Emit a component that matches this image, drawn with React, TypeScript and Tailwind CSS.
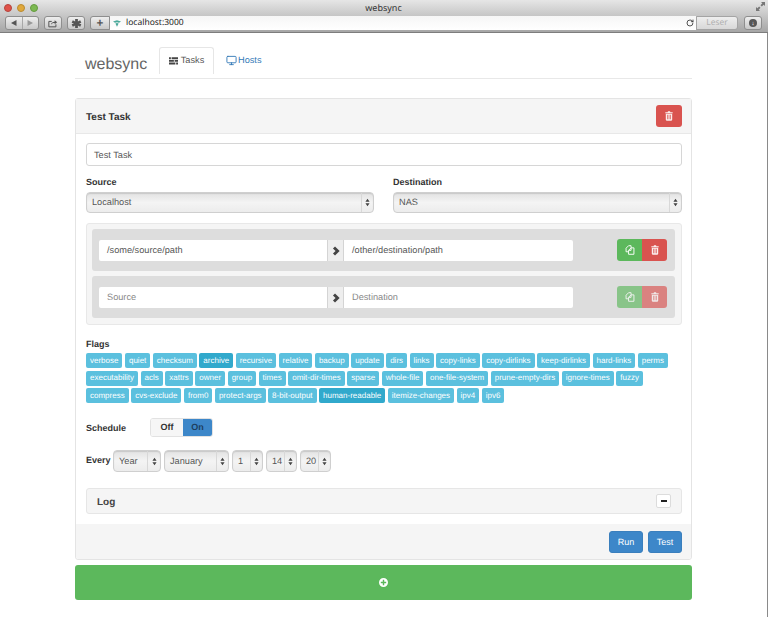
import React from "react";
import { Monitor, RotateCw } from "lucide-react";

const FONT = "font-['Liberation_Sans',Arial,sans-serif]";

function Trash({ className = "" }: { className?: string }) {
  return (
    <svg viewBox="0 0 12 14" className={className} fill="currentColor">
      <path d="M4.500 0h3l.6 1.200H11c.4 0 .7.3.7.7v.9H.3v-.9c0-.4.3-.7.7-.7h2.900L4.500 0z" />
      <path d="M1.200 3.500h9.600v9.300c0 .7-.5 1.200-1.200 1.200H2.400c-.7 0-1.200-.5-1.200-1.200V3.500zM3 5v7h1V5H3zm2.500 0v7h1V5h-1zM8 5v7h1V5H8z" fillRule="evenodd" />
    </svg>
  );
}

function CopyIcon({ className = "" }: { className?: string }) {
  return (
    <svg viewBox="0 0 14 14" className={className} fill="none" stroke="currentColor" strokeWidth="1.300" strokeLinejoin="round">
      <path d="M5 1 1.500 4.500V9.500H5M5 1h3.500v3" />
      <path d="M8.500 4 5 7.500v5.500h7.500V4H8.500z" />
      <path d="M8.500 4v3.500H5" />
    </svg>
  );
}

function Stepper() {
  return (
    <svg viewBox="0 0 6 10" className="w-[5px] h-[9px] text-[#444]" fill="currentColor">
      <path d="M3 0.500 5.500 4H.5zM3 9.500 .5 6h5z" />
    </svg>
  );
}

function FakeSelect({ value, className = "", arrow = "w-[13px]", textClass = "" }: { value: string; className?: string; arrow?: string; textClass?: string }) {
  return (
    <div className={`flex items-stretch rounded-[4px] border border-[#cfcfcf] bg-gradient-to-b from-[#e2e2e2] via-[#f4f4f4] to-[#ececec] shadow-[inset_0_1px_1px_rgba(0,0,0,0.12)] text-[9.200px] text-[#555] ${className}`}>
      <span className={`flex-1 flex items-center pl-[5px] whitespace-nowrap overflow-hidden ${textClass}`}>{value}</span>
      <span className={`flex items-center justify-center border-l border-[#d8d8d8] ${arrow}`}>
        <Stepper />
      </span>
    </div>
  );
}

function PathRow({ src, dst, placeholder = false }: { src: string; dst: string; placeholder?: boolean }) {
  const text = placeholder ? "text-[#888]" : "text-[#555]";
  return (
    <div className="flex items-start h-[42px] rounded-[3px] bg-[#dddddd] pl-[7px] pr-[8px] pt-[10px]">
      <div className={`mt-[1px] flex h-[21px] w-[474px] text-[9.200px] ${text}`}>
        <div className="flex w-[228px] items-center rounded-l-[2px] bg-white pl-[8px] pt-[1px]">{src}</div>
        <div className="flex w-[17px] items-center justify-center bg-[#eeeeee] border-x border-[#d4d4d4]">
          <svg viewBox="0 0 10 12" className="w-[8px] h-[10px] text-[#444]" fill="none" stroke="currentColor" strokeWidth="3.600">
            <path d="M2.500 1.500 7 6l-4.500 4.500" />
          </svg>
        </div>
        <div className="flex flex-1 items-center rounded-r-[2px] bg-white pl-[8px] pt-[1px]">{dst}</div>
      </div>
      <div className={`ml-auto flex h-[22px] text-white ${placeholder ? "opacity-65" : ""}`}>
        <div className="flex w-[25px] items-center justify-center rounded-l-[3px] bg-[#5cb85c]">
          <CopyIcon className="w-[10px] h-[10px]" />
        </div>
        <div className="flex w-[25px] items-center justify-center rounded-r-[3px] bg-[#d9534f]">
          <Trash className="w-[8px] h-[10px] opacity-90" />
        </div>
      </div>
    </div>
  );
}

const FLAGS = [
  "verbose", "quiet", "checksum", "archive", "recursive", "relative", "backup", "update", "dirs", "links",
  "copy-links", "copy-dirlinks", "keep-dirlinks", "hard-links", "perms", "executability", "acls", "xattrs",
  "owner", "group", "times", "omit-dir-times", "sparse", "whole-file", "one-file-system", "prune-empty-dirs",
  "ignore-times", "fuzzy", "compress", "cvs-exclude", "from0", "protect-args", "8-bit-output", "human-readable",
  "itemize-changes", "ipv4", "ipv6",
];
const ACTIVE = new Set(["archive", "human-readable"]);

function BrowserChrome() {
  const btn = "flex items-center justify-center h-[14px] rounded-[3px] border border-[#8e8e8e] bg-gradient-to-b from-[#eeeeee] to-[#c8c8c8] text-[#555]";
  return (
    <div className="h-[33px] bg-gradient-to-b from-[#e6e6e6] to-[#a6a6a6] border-b border-[#7d7d7d] font-['Noto_Sans',sans-serif]">
      <div className="relative flex items-center h-[15px] pl-[4px] gap-[5px]">
        <span className="h-[8px] w-[8px] rounded-full bg-[#e0524a] border border-[#b5443c]" />
        <span className="h-[8px] w-[8px] rounded-full bg-[#e0a83c] border border-[#b98a30]" />
        <span className="h-[8px] w-[8px] rounded-full bg-[#7cb951] border border-[#659a40]" />
        <span className="flex-1 pr-[44px] text-center text-[9px] leading-[12px] text-[#333]">websync</span>
        <svg viewBox="0 0 10 10" className="absolute right-[3px] top-[2px] w-[9px] h-[9px] text-[#777]" fill="currentColor">
          <path d="M5.500 0H10v4.500L8.500 3 6.500 5 5 3.500 7 1.500zM4.500 10H0V5.500L1.500 7l2-2L5 6.500 3 8.500z" />
        </svg>
      </div>
      <div className="flex items-center h-[14px] pl-[5px] mt-[1px]">
        <div className={`${btn} w-[34px]`}>
          <span className="flex flex-1 items-center justify-center h-full border-r border-[#a8a8a8]">
            <svg viewBox="0 0 6 6" className="w-[6px] h-[6px] text-[#555]" fill="currentColor"><path d="M5.500 0v6L0 3z" /></svg>
          </span>
          <span className="flex flex-1 items-center justify-center h-full">
            <svg viewBox="0 0 6 6" className="w-[6px] h-[6px] text-[#999]" fill="currentColor"><path d="M.5 0v6L6 3z" /></svg>
          </span>
        </div>
        <div className={`${btn} w-[18px] ml-[5px]`}>
          <svg viewBox="0 0 12 10" className="w-[10px] h-[9px]" fill="none" stroke="currentColor" strokeWidth="1.200">
            <path d="M9.500 6v3H1V2.500h3.500" />
            <path d="M3.500 6.500C4 4 6 3 8 3V1l3 2.500L8 6V4.500C6 4.500 4.500 5 3.500 6.500z" fill="currentColor" stroke="none" />
          </svg>
        </div>
        <div className={`${btn} w-[18px] ml-[5px]`}>
          <svg viewBox="0 0 12 12" className="w-[11px] h-[11px]" fill="currentColor">
            <path d="M4.500 1h3v2.800L10 2.500l1.300 2.700L8.700 6l2.600.8L10 9.500 7.500 8.200V11h-3V8.200L2 9.500.7 6.800 3.300 6 .7 5.200 2 2.500l2.500 1.300z" />
          </svg>
        </div>
        <div className={`${btn} w-[20px] ml-[5px] rounded-r-none`}>
          <span className="text-[12px] leading-none font-bold">+</span>
        </div>
        <div className="flex flex-1 items-center h-[14px] bg-gradient-to-b from-[#f6f6f6] to-white pl-[3px] text-[8.500px] text-[#222]">
          <svg viewBox="0 0 10 8" className="w-[8px] h-[7px] text-[#4aa89a] mr-[5px]" fill="currentColor">
            <path d="M0 1.500 5 0l5 1.500L7.500 3 5 2.500 2.500 3zM3 4l2-.6L7 4 5 8z" />
          </svg>
          localhost:3000
          <RotateCw className="ml-auto mr-[2px] w-[8px] h-[8px] text-[#333]" strokeWidth={2.500} />
        </div>
        <div className="flex items-center justify-center w-[42px] h-[14px] rounded-r-[3px] border border-[#a4a4a4] bg-gradient-to-b from-[#eeeeee] to-[#d8d8d8] text-[8.500px] text-[#b0b0b0]">
          Leser
        </div>
        <div className={`${btn} w-[18px] ml-[6px] mr-[6px]`}>
          <span className="flex h-[8px] w-[8px] items-center justify-center rounded-full bg-[#555] text-[6px] text-white leading-none">↓</span>
        </div>
      </div>
    </div>
  );
}

export default function App() {
  return (
    <div className={`${FONT} [text-rendering:geometricPrecision] relative h-[617px] w-[768px] overflow-hidden bg-white text-[#333]`}>
      <BrowserChrome />
      <div className="ml-[75px] w-[617px]">
        <header className="flex items-start h-[46px] border-b border-[#e8e8e8] pl-[1px] pt-[14px]">
          <div className="w-[83px] pl-[9px] pt-[8px] text-[16px] leading-[20px] text-[#666]">websync</div>
          <div className="flex h-[27px] w-[55px] items-center justify-center gap-[3px] rounded-t-[3px] border border-b-0 border-[#e6e6e6] bg-white text-[9.200px] text-[#555]">
            <svg viewBox="0 0 12 10" className="w-[9px] h-[8px] text-[#444]" fill="currentColor">
              <path d="M0 0h2.500v2.500H0zM3.500 0h8.500v2.500H3.500zM0 3.500h6.500V6H0zM7.500 3.500H12V6H7.500zM0 7h8.500v2.500H0zM9.500 7H12v2.500H9.500z" />
            </svg>
            Tasks
          </div>
          <div className="flex h-[27px] items-center gap-[1px] pl-[12px] text-[9.200px] text-[#337ab7]">
            <Monitor className="w-[11px] h-[11px]" strokeWidth={2} />
            Hosts
          </div>
        </header>

        <section className="mt-[19px] rounded-[3px] border border-[#e4e4e4]">
          <div className="flex h-[35px] items-center justify-between border-b border-[#e8e8e8] bg-[#f5f5f5] pl-[10px] pr-[9px]">
            <span className="pt-[2px] text-[10px] font-bold text-[#333]">Test Task</span>
            <div className="flex h-[22px] w-[26px] items-center justify-center rounded-[3px] bg-[#d9534f] text-white">
              <Trash className="w-[8px] h-[10px] opacity-90" />
            </div>
          </div>

          <div className="pl-[10px] pr-[9px] pt-[9px]">
            <div className="flex h-[23px] items-center rounded-[3px] border border-[#d6d6d6] pl-[7px] pt-[2px] text-[9.200px] text-[#555]">Test Task</div>

            <div className="mt-[11px] flex">
              <div className="w-[288px]">
                <div className="h-[15px] text-[9px] font-bold leading-[11px]">Source</div>
                <FakeSelect value="Localhost" className="h-[21px]" arrow="w-[12px]" />
              </div>
              <div className="ml-[19px] flex-1">
                <div className="h-[15px] text-[9px] font-bold leading-[11px]">Destination</div>
                <FakeSelect value="NAS" className="h-[21px]" arrow="w-[12px]" />
              </div>
            </div>

            <div className="mt-[10px] flex flex-col gap-[5px] rounded-[3px] border border-[#e8e8e8] bg-[#f5f5f5] pl-[5px] pt-[5px] pb-[6px] pr-[6px]">
              <PathRow src="/some/source/path" dst="/other/destination/path" />
              <PathRow src="Source" dst="Destination" placeholder />
            </div>

            <div className="mt-[13px] text-[9px] font-bold leading-[12px]">Flags</div>
            <div className="mt-[3px] flex flex-wrap gap-x-[2.500px] gap-y-[2.500px]">
              {FLAGS.map((f) => (
                <span
                  key={f}
                  className={`flex h-[15px] items-center rounded-[2px] px-[4px] text-[8px] text-white ${ACTIVE.has(f) ? "bg-[#31a9cc]" : "bg-[#5bc0de]"}`}
                >
                  {f}
                </span>
              ))}
            </div>

            <div className="mt-[15px] flex items-center">
              <span className="w-[64px] pt-[2px] text-[9px] font-bold">Schedule</span>
              <div className="flex h-[19px] w-[63px] overflow-hidden rounded-[3px] border border-[#e2e2e2] text-[9px] font-bold">
                <span className="flex w-[32px] items-center justify-center bg-[#f6f6f6] pt-[1px] text-[#333]">Off</span>
                <span className="flex flex-1 items-center justify-center bg-[#3d87c9] pt-[1px] text-[#1d3f60]">On</span>
              </div>
            </div>

            <div className="mt-[13px] flex items-center">
              <span className="w-[27px] text-[9px] font-bold">Every</span>
              <FakeSelect value="Year" textClass="pt-[2px]" className="h-[22px] w-[48px] mr-[3px]" arrow="w-[13px]" />
              <FakeSelect value="January" textClass="pt-[2px]" className="h-[22px] w-[65px] mr-[3px]" arrow="w-[12px]" />
              <FakeSelect value="1" textClass="pt-[2px]" className="h-[22px] w-[31px] mr-[3px]" arrow="w-[12px]" />
              <FakeSelect value="14" textClass="pt-[2px]" className="h-[22px] w-[31px] mr-[3px]" arrow="w-[12px]" />
              <FakeSelect value="20" textClass="pt-[2px]" className="h-[22px] w-[31px]" arrow="w-[12px]" />
            </div>

            <div className="mt-[16px] flex h-[26px] items-center justify-between rounded-[3px] border border-[#e6e6e6] bg-[#f5f5f5] pl-[10px] pr-[10px]">
              <span className="pt-[2px] text-[10px] font-bold text-[#444]">Log</span>
              <span className="flex h-[14px] w-[15px] items-center justify-center rounded-[2px] border border-[#dcdcdc] bg-white">
                <span className="h-[2px] w-[6px] bg-[#222]" />
              </span>
            </div>
          </div>

          <div className="mt-[10px] flex h-[35px] items-center justify-end gap-[5px] rounded-b-[3px] bg-[#f5f5f5] pr-[9px] text-[9px] text-white">
            <span className="flex h-[22px] w-[34px] items-center justify-center rounded-[3px] border border-[#3a7fbd] bg-[#3d87c9] pt-[2px]">Run</span>
            <span className="flex h-[22px] w-[34px] items-center justify-center rounded-[3px] border border-[#3a7fbd] bg-[#3d87c9] pt-[2px]">Test</span>
          </div>
        </section>

        <div className="mt-[5px] flex h-[35px] items-center justify-center rounded-[3px] bg-[#5cb85c]">
          <svg viewBox="0 0 10 10" className="w-[9px] h-[9px] text-white" fill="currentColor">
            <path fillRule="evenodd" d="M5 0a5 5 0 1 1 0 10A5 5 0 0 1 5 0zM4.200 2v2.200H2v1.600h2.200V8h1.600V5.800H8V4.200H5.800V2z" />
          </svg>
        </div>
      </div>
      <div className="absolute right-0 top-[33px] bottom-0 w-px bg-[#8a8a8a]" />
    </div>
  );
}
